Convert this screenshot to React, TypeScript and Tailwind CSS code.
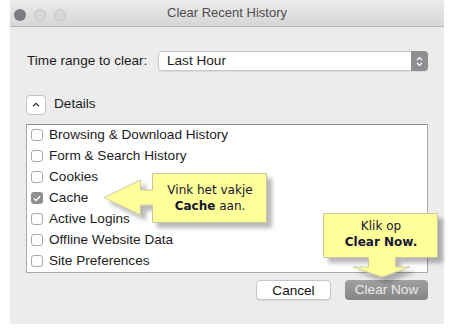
import React from "react";

const items = [
  { label: "Browsing & Download History", checked: false },
  { label: "Form & Search History", checked: false },
  { label: "Cookies", checked: false },
  { label: "Cache", checked: true },
  { label: "Active Logins", checked: false },
  { label: "Offline Website Data", checked: false },
  { label: "Site Preferences", checked: false },
];

function Checkbox({ checked }: { checked: boolean }) {
  if (checked) {
    return (
      <span className="flex h-[12px] w-[12px] items-center justify-center rounded-[3px] bg-[#8e8e8e]">
        <svg width="8" height="7" viewBox="0 0 8 7">
          <path d="M1 3.6 L3.1 5.6 L7 1.2" fill="none" stroke="#fff" strokeWidth="1.4" />
        </svg>
      </span>
    );
  }
  return <span className="h-[12px] w-[12px] rounded-[3px] border border-[#a9a9a9] bg-white" />;
}

export default function App() {
  const sans = "font-['Liberation_Sans',Arial,sans-serif]";
  const tip = "font-['DejaVu_Sans',Verdana,sans-serif] text-[12px] leading-[16px] text-[#151535]";

  return (
    <div className={`relative h-[334px] w-[454px] bg-white ${sans}`}>
      <div className="ml-[10px] flex h-[324px] w-[434px] flex-col bg-[#ececec]">
        {/* title bar */}
        <div className="relative flex h-[27px] items-center justify-center border-b border-[#b5b5b5] bg-gradient-to-b from-[#ececec] to-[#d6d6d6]">
          <div className="absolute left-[4px] top-[9px] flex gap-[8px]">
            <span className="h-[12px] w-[12px] rounded-full bg-[#7c7b81]" />
            <span className="h-[12px] w-[12px] rounded-full border border-[#c6c6c6] bg-[#d8d8d8]" />
            <span className="h-[12px] w-[12px] rounded-full border border-[#c6c6c6] bg-[#d8d8d8]" />
          </div>
          <span className="text-[13px] text-[#4d4d4d]">Clear Recent History</span>
        </div>

        <div className="flex flex-1 flex-col px-[16px] pt-[24px]">
          {/* time range */}
          <div className="flex items-center">
            <span className="ml-[1px] w-[131px] text-[13.6px] text-[#1c1c1c]">Time range to clear:</span>
            <div className="flex h-[20px] flex-1 items-center rounded-[4px] border border-[#c9c9c9] bg-white shadow-[0_1px_1px_rgba(0,0,0,0.08)]">
              <span className="flex-1 pl-[8px] text-[13.6px] text-[#1c1c1c]">Last Hour</span>
              <span className="-mr-px flex h-[20px] w-[17px] items-center justify-center rounded-r-[4px] bg-[#8e8e93]">
                <svg width="7" height="11" viewBox="0 0 7 11">
                  <path d="M1 4 L3.5 1.5 L6 4 M1 7 L3.5 9.5 L6 7" fill="none" stroke="#fff" strokeWidth="1.2" />
                </svg>
              </span>
            </div>
          </div>

          {/* details */}
          <div className="mt-[23px] flex items-center">
            <span className="flex h-[20px] w-[20px] items-center justify-center rounded-[4px] border border-[#c3c3c3] bg-white">
              <svg width="8" height="5" viewBox="0 0 8 5">
                <path d="M1 4.2 L4 1.3 L7 4.2" fill="none" stroke="#333" strokeWidth="1.3" />
              </svg>
            </span>
            <span className="ml-[8px] text-[13.6px] text-[#1c1c1c]">Details</span>
          </div>

          {/* list */}
          <div className="mt-[9px] flex flex-col border border-[#a9a9a9] border-t-[#8f8f8f] bg-white">
            {items.map((it) => (
              <div key={it.label} className="flex h-[21px] items-center pl-[4px]">
                <Checkbox checked={it.checked} />
                <span className="ml-[6px] text-[13.6px] text-[#1c1c1c]">{it.label}</span>
              </div>
            ))}
          </div>

          {/* buttons */}
          <div className="mt-[7px] flex justify-end gap-[14px]">
            <button className="h-[20px] w-[75px] rounded-[4px] border border-[#c6c6c6] bg-white text-[13.6px] text-[#111] shadow-[0_1px_1px_rgba(0,0,0,0.08)]">
              Cancel
            </button>
            <button className="h-[20px] w-[83px] rounded-[4px] bg-gradient-to-b from-[#a0a0a0] to-[#858585] text-[13.6px] text-[#ececec]">
              Clear Now
            </button>
          </div>
        </div>
      </div>

      {/* callout shapes */}
      <svg className="pointer-events-none absolute left-0 top-0" width="454" height="334" viewBox="0 0 454 334">
        <defs>
          <filter id="sh" x="-20%" y="-20%" width="140%" height="150%">
            <feDropShadow dx="5" dy="5" stdDeviation="2" floodColor="#000" floodOpacity="0.28" />
          </filter>
        </defs>
        <polygon
          points="152.5,173.5 266.5,173.5 266.5,222.5 152.5,222.5 152.5,205 140.5,205 140.5,215 104,197.5 140.5,180 140.5,190 152.5,190"
          fill="#ffff99"
          stroke="#c9c99f"
          filter="url(#sh)"
        />
        <polygon
          points="323.5,213.5 437.5,213.5 437.5,257.5 395.5,257.5 395.5,267 410,267 382,277 353,267 368.5,267 368.5,257.5 323.5,257.5"
          fill="#ffff99"
          stroke="#c9c99f"
          filter="url(#sh)"
        />
      </svg>

      <div className={`absolute left-[153px] top-[182px] w-[114px] text-center ${tip}`}>
        <div>Vink het vakje</div>
        <div>
          <b>Cache</b> aan.
        </div>
      </div>

      <div className={`absolute left-[324px] top-[218px] w-[114px] text-center ${tip}`}>
        <div>Klik op</div>
        <div>
          <b>Clear Now.</b>
        </div>
      </div>
    </div>
  );
}
